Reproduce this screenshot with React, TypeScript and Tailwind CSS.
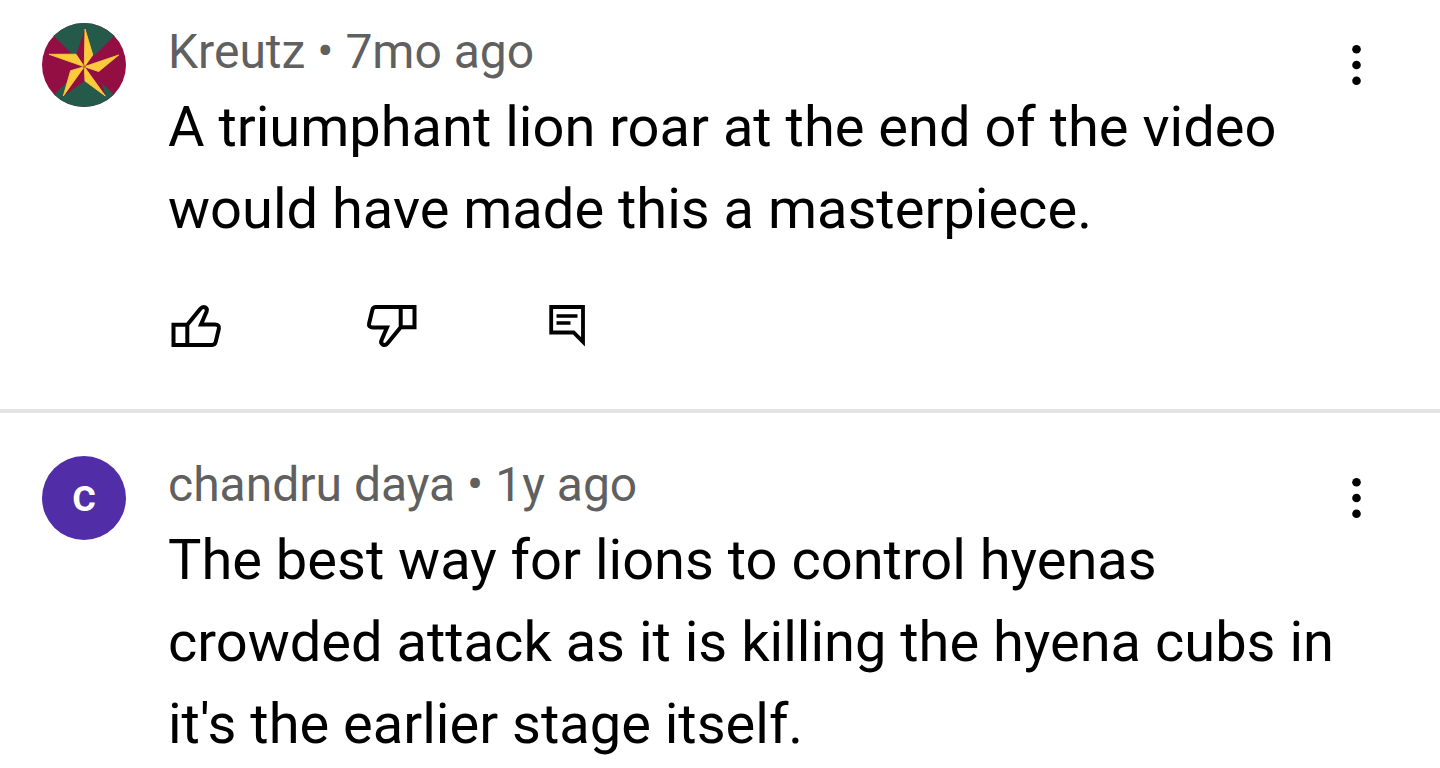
import type { ReactNode } from 'react';

type Comment = {
  author: string;
  age: string;
  text: string;
  avatar: ReactNode;
};

function StarAvatar() {
  return (
    <svg viewBox="0 0 84 84" className="size-[84px] shrink-0 rounded-full" role="img" aria-label="Kreutz">
      <rect width="84" height="84" fill="#930f43" />
      <path d="M42 43 L-2 -1 H86 Z M42 43 L-2 85 H86 Z" fill="#25594a" />
      <path
        d="M43 6 L50.3 32 L76.7 32 L56.7 48 L63.3 73 L43 57.7 L21.3 73 L29 47.7 L7 31.3 L34 31.7 Z"
        fill="#930f43"
      />
      <path
        d="M42.3 43.7 L43 6 L50.8 32 Z M42.3 43.7 L76.7 32 L56.7 48.5 Z M42.3 43.7 L63.3 73 L43 58 Z M42.3 43.7 L21.3 73 L28.6 47.7 Z M42.3 43.7 L7 31.3 L34 31.2 Z"
        fill="#fbcb3c"
        stroke="#fbcb3c"
        strokeWidth="0.9"
        strokeLinejoin="round"
      />
      <circle cx="42.3" cy="43.7" r="1.6" fill="#c8702c" />
    </svg>
  );
}

function LetterAvatar({ letter }: { letter: string }) {
  return (
    <div className="flex size-[84px] shrink-0 items-center justify-center rounded-full bg-[#512da8]">
      <span className="pb-1.5 text-[46px] leading-[48px] font-medium text-white">{letter}</span>
    </div>
  );
}

function ThumbIcon({ className }: { className?: string }) {
  return (
    <svg
      viewBox="0 0 56 56"
      className={className}
      fill="none"
      stroke="currentColor"
      strokeWidth="4"
      aria-hidden="true"
    >
      <path d="M19.3 26.8 L32.4 10.8 C35.4 7.1 40 9.7 38.5 13.7 L33 26.4 H47 C49.9 26.4 51.5 28.1 50.9 30.5 L47.7 43.9 C47.2 46 45.9 46.9 44.1 46.9 H5.5 V26.8 H19.3 V46.9" />
    </svg>
  );
}

function ReplyIcon() {
  return (
    <svg viewBox="0 0 56 56" className="size-14" aria-hidden="true">
      <path d="M12.2 9 H44 V43.9 L34.6 34.5 H12.2 Z" fill="none" stroke="currentColor" strokeWidth="3.8" />
      <path d="M17.5 18 H38.5 M17.5 25 H31.5" stroke="currentColor" strokeWidth="3.6" />
    </svg>
  );
}

function MenuButton() {
  return (
    <button type="button" aria-label="More options" className="h-[84px] w-8 shrink-0">
      <svg viewBox="0 0 32 84" className="h-[84px] w-8" fill="currentColor" aria-hidden="true">
        <circle cx="15.5" cy="26.3" r="4.3" />
        <circle cx="15.5" cy="42" r="4.3" />
        <circle cx="15.5" cy="57.7" r="4.3" />
      </svg>
    </button>
  );
}

function CommentRow({ comment, children }: { comment: Comment; children?: ReactNode }) {
  return (
    <div className="flex items-start pr-[67px] pl-[42px]">
      {comment.avatar}
      <div className="ml-[42px] min-w-0 flex-1">
        <h2 className="text-[48px] leading-[58px] text-[#606060]">
          {comment.author} • {comment.age}
        </h2>
        <p className="mt-[5px] text-[56px] leading-[82px]">{comment.text}</p>
        {children}
      </div>
      <MenuButton />
    </div>
  );
}

const first: Comment = {
  author: 'Kreutz',
  age: '7mo ago',
  text: 'A triumphant lion roar at the end of the video would have made this a masterpiece.',
  avatar: <StarAvatar />,
};

const second: Comment = {
  author: 'chandru daya',
  age: '1y ago',
  text: "The best way for lions to control hyenas crowded attack as it is killing the hyena cubs in it's the earlier stage itself.",
  avatar: <LetterAvatar letter="c" />,
};

export default function App() {
  return (
    <main className="bg-white font-['Roboto',sans-serif] text-black">
      <article className="border-b-4 border-[#e4e4e4] pt-[23px] pb-[55px]">
        <CommentRow comment={first}>
          <div className="mt-12 flex">
            <button type="button" aria-label="Like" className="mr-[140px]">
              <ThumbIcon className="size-14" />
            </button>
            <button type="button" aria-label="Dislike" className="mr-[119px]">
              <ThumbIcon className="size-14 rotate-180" />
            </button>
            <button type="button" aria-label="Reply">
              <ReplyIcon />
            </button>
          </div>
        </CommentRow>
      </article>
      <article className="pt-[43px]">
        <CommentRow comment={second} />
      </article>
    </main>
  );
}
